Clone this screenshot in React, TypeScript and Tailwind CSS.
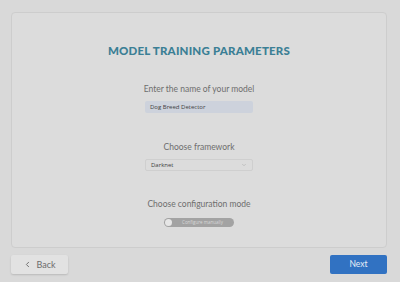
import { ChevronDown, ChevronLeft } from "lucide-react";
import React from "react";

const App = () => {
  return (
    <div className="w-[400px] h-[282px] bg-[#d9d9d9] flex flex-col pl-[11px] pr-[13px] pt-[12px] font-['Lato',sans-serif] overflow-hidden">
      <div className="h-[236px] w-full bg-[#dcdcdc] border border-[#cdcdcd] rounded-[4px] flex flex-col items-center pt-[31px]">
        <h1 className="text-[11.5px] leading-[14px] font-black tracking-[0.2px] text-[#3b7f95]">
          MODEL TRAINING PARAMETERS
        </h1>

        <label className="mt-[25px] text-[8.5px] leading-[12px] text-[#6e6e6e]">
          Enter the name of your model
        </label>
        <div className="mt-[6px] w-[108px] h-[12px] bg-[#cdd2dc] rounded-[2px] px-[5px] flex items-center text-[6px] text-[#3f3f3f] font-['Open_Sans',sans-serif]">
          Dog Breed Detector
        </div>

        <label className="mt-[28px] text-[8.5px] leading-[12px] text-[#6e6e6e]">
          Choose framework
        </label>
        <div className="mt-[6px] w-[108px] h-[12px] border border-[#cfcfcf] rounded-[2px] px-[5px] flex items-center justify-between text-[6px] text-[#3f3f3f] font-['Open_Sans',sans-serif]">
          Darknet
          <ChevronDown className="w-[6px] h-[6px] text-[#a5a5a5]" />
        </div>

        <label className="mt-[27px] text-[8.5px] leading-[12px] text-[#6e6e6e]">
          Choose configuration mode
        </label>
        <div className="mt-[8px] w-[70px] h-[9px] bg-[#a3a3a3] rounded-full flex items-center px-[1px]">
          <div className="w-[7px] h-[7px] rounded-full bg-[#e6e6e6]" />
          <span className="flex-1 text-center text-[4.5px] text-[#d8d8d8] font-['Open_Sans',sans-serif]">
            Configure manually
          </span>
        </div>
      </div>

      <div className="mt-[7px] flex justify-between">
        <button
          type="button"
          className="w-[57px] h-[19px] bg-[#e2e2e2] rounded-[2px] shadow-[0_1px_2px_rgba(0,0,0,0.15)] flex items-center justify-center gap-[4px] text-[9px] text-[#6b6b6b]"
        >
          <ChevronLeft className="w-[9px] h-[9px]" strokeWidth={2.5} />
          Back
        </button>
        <button
          type="button"
          className="w-[57px] h-[19px] bg-[#3172c2] rounded-[2px] flex items-center justify-center text-[8.5px] text-[#e8eef6]"
        >
          Next
        </button>
      </div>
    </div>
  );
};

export default App;
